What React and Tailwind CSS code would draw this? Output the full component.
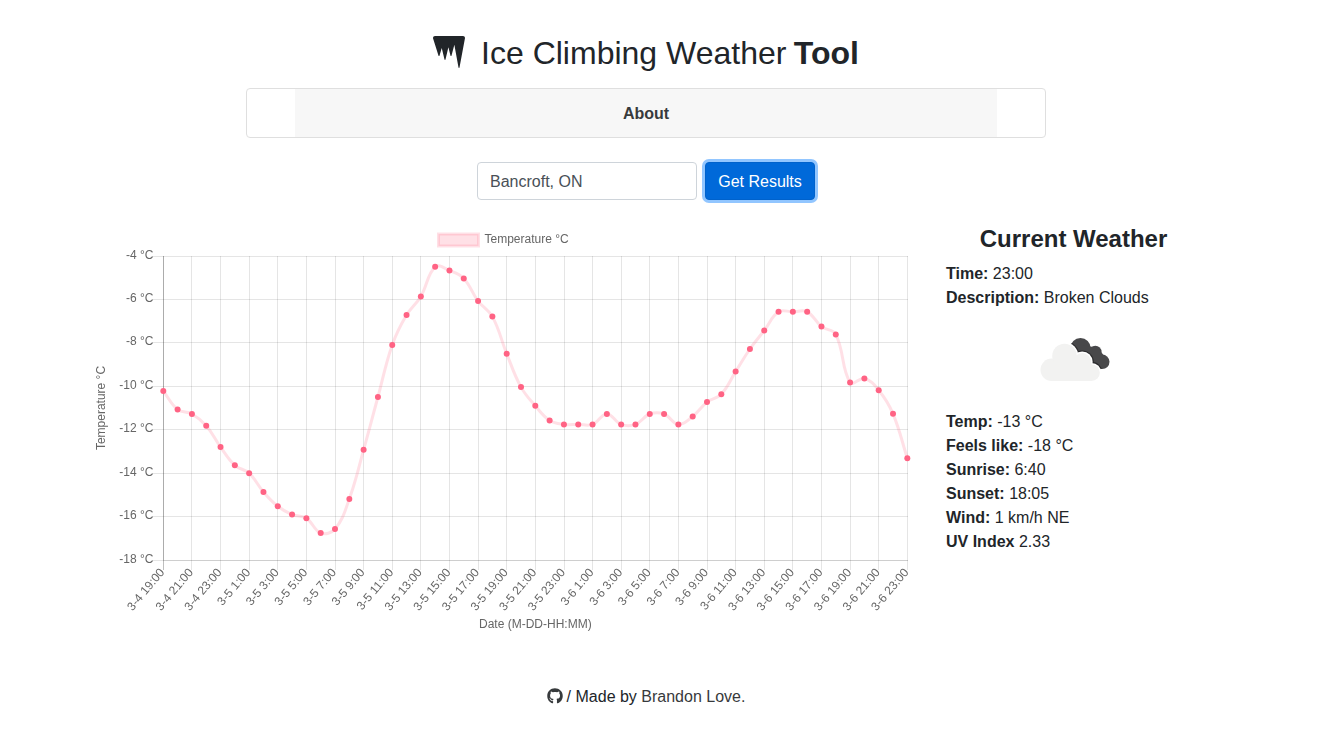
import { FaGithub, FaIcicles } from "react-icons/fa";

const LEFT = 71.3;
const STEP = 14.308;
const POINTS = [
  391, 409.5, 414, 425.7, 447, 465.3, 473.2, 492, 506.3, 514.6, 518.3, 533, 529, 499, 449.8, 397,
  344.9, 315, 296.4, 266.8, 270.4, 278.4, 301.1, 316.6, 353.7, 387.1, 405.8, 420.5, 424.4, 424.4,
  424.4, 414, 424.4, 424.4, 414, 414, 424.4, 416.5, 402.1, 394.2, 371.6, 349, 330.5, 311.8, 311.8,
  311.8, 326.6, 334.4, 382.4, 378.5, 390.2, 413.8, 458.3,
].map((y, i) => ({ x: LEFT + i * STEP, y: y - 222 }));

const Y_TICKS = [
  ["-4 °C", 34], ["-6 °C", 77], ["-8 °C", 120], ["-10 °C", 164],
  ["-12 °C", 207], ["-14 °C", 251], ["-16 °C", 294], ["-18 °C", 338],
];

const X_LABELS = Array.from({ length: 27 }, (_, i) => {
  const hours = 19 + i * 2;
  return `3-${4 + Math.floor(hours / 24)} ${hours % 24}:00`;
});

// Cubic spline through every point, with control points clamped to the plot area
function splinePath(points, tension = 0.4) {
  const clamp = (v) => Math.max(34, Math.min(338, v));
  const controls = points.map((p, i) => {
    const prev = points[i - 1] || p;
    const next = points[i + 1] || p;
    const a = Math.hypot(p.x - prev.x, p.y - prev.y);
    const b = Math.hypot(next.x - p.x, next.y - p.y);
    const fa = (tension * a) / (a + b);
    const fb = (tension * b) / (a + b);
    return {
      before: [p.x - fa * (next.x - prev.x), clamp(p.y - fa * (next.y - prev.y))],
      after: [p.x + fb * (next.x - prev.x), clamp(p.y + fb * (next.y - prev.y))],
    };
  });
  return points
    .map((p, i) =>
      i === 0
        ? `M${p.x} ${p.y}`
        : `C${controls[i - 1].after.join(" ")} ${controls[i].before.join(" ")} ${p.x} ${p.y}`
    )
    .join("");
}

function TemperatureChart() {
  return (
    <svg
      width="826"
      height="412"
      className="block shrink-0 will-change-transform font-['Helvetica_Neue',Helvetica,Arial,sans-serif] text-[12px]"
      fill="#666"
      role="img"
      aria-label="Temperature forecast"
    >
      <rect x="346.5" y="12" width="40" height="12" fill="#ff6384" fillOpacity="0.2" />
      <rect x="346.5" y="12" width="40" height="12" fill="none" stroke="#ff6384" strokeOpacity="0.2" strokeWidth="3" />
      <text x="392.5" y="21">Temperature °C</text>
      <g stroke="#000" strokeOpacity="0.1">
        {Y_TICKS.map(([label, y]) => (
          <line key={label} x1="61" x2="816" y1={y + 0.5} y2={y + 0.5} />
        ))}
        {X_LABELS.map((label, i) => {
          const x = Math.floor(71 + i * 28.62 + 0.35) + 0.5;
          return <line key={label} x1={x} x2={x} y1="34" y2="348" strokeOpacity={i === 0 ? 0.25 : 0.1} />;
        })}
        <line x1="71.5" x2="71.5" y1="34" y2="338" />
        <line x1="71" x2="816" y1="338.5" y2="338.5" />
      </g>
      <path d={splinePath(POINTS)} fill="none" stroke="#ff6384" strokeOpacity="0.2" strokeWidth="3" />
      {POINTS.map((p, i) => (
        <circle key={i} cx={p.x} cy={p.y} r="3" fill="#ff6384" />
      ))}
      {Y_TICKS.map(([label, y]) => (
        <text key={label} x="61.5" y={y + 3} textAnchor="end">{label}</text>
      ))}
      {X_LABELS.map((label, i) => (
        <text
          key={label}
          textAnchor="end"
          y="4"
          transform={`translate(${70 + i * 28.62} 348) rotate(-50)`}
        >
          {label}
        </text>
      ))}
      <text x="443.3" y="406" textAnchor="middle">Date (M-DD-HH:MM)</text>
      <text textAnchor="middle" transform="translate(13 186) rotate(-90)">Temperature °C</text>
    </svg>
  );
}

const BACK_CLOUD = [
  [65.5, 37.2, 10.2],
  [80.3, 41, 6.3],
  [87.2, 50.8, 7.3],
];
const FRONT_CLOUD = [
  [36.7, 58.8, 11.2],
  [49.5, 45, 12.3],
  [67.2, 51, 9],
  [76.5, 61.7, 8.3],
];

function FrontCloud({ grow = 0, fill }) {
  return (
    <g fill={fill}>
      {FRONT_CLOUD.map(([x, y, r]) => (
        <circle key={x} cx={x} cy={y} r={r + grow} />
      ))}
      <path d="M36.700 70V52H76.500V70Z" />
    </g>
  );
}

function BackCloud({ fill }) {
  return (
    <>
      {BACK_CLOUD.map(([x, y, r]) => (
        <circle key={x} cx={x} cy={y} r={r} fill={fill} />
      ))}
      <path d="M58 44L68 34L83 37L90 46L86 58L75 60Z" fill={fill} />
    </>
  );
}

function BrokenCloudsIcon() {
  return (
    <svg width="120" height="100" viewBox="0 0 120 100" className="ml-[2px] mt-px block" aria-hidden="true">
      <clipPath id="back-cloud">
        <BackCloud />
      </clipPath>
      <BackCloud fill="#48484a" />
      <g clipPath="url(#back-cloud)">
        <FrontCloud grow={2.6} fill="#2a2a2c" />
      </g>
      <FrontCloud grow={1.5} fill="#fff" />
      <FrontCloud fill="#f2f2f1" />
    </svg>
  );
}

function Reading({ label, value }) {
  return (
    <p>
      <b>{label}</b> {value}
    </p>
  );
}

export default function App() {
  return (
    <div className="h-[750px] w-[1292px] bg-white pt-[34px] font-['Liberation_Sans',Arial,sans-serif] text-base leading-6 text-[#212529]">
      <h1 className="flex h-[38px] items-center justify-center text-[32px] leading-[38px]">
        <FaIcicles className="mr-4 shrink-0 -translate-y-px" size={32} />
        <span>
          Ice Climbing Weather <b className="-ml-[1.5px]">Tool</b>
        </span>
      </h1>
      <nav className="mx-auto mt-4 flex h-[50px] w-[800px] justify-center rounded border border-[#dfdfdf]">
        <button className="w-[702px] bg-[#f7f7f7] pt-0.5 font-bold text-[#373a3c]">About</button>
      </nav>
      <form className="mt-6 flex justify-center gap-2" onSubmit={(e) => e.preventDefault()}>
        <input
          className="h-[38px] w-[220px] rounded border border-[#ced4da] px-3 pt-0.5 text-[#495057] outline-none"
          defaultValue="Bancroft, ON"
        />
        <button className="h-[38px] w-[110px] rounded border border-[#0062cc] bg-[#0069d9] pt-0.5 text-white shadow-[0_0_0_3px_#92c6ff]">
          Get Results
        </button>
      </form>
      <main className="mt-[22px] flex pl-[92px]">
        <TemperatureChart />
        <aside className="ml-7 w-[255px] pt-[2px]">
          <h2 className="mb-[9px] text-center text-[24px] leading-[29px] font-bold">Current Weather</h2>
          <Reading label="Time:" value="23:00" />
          <Reading label="Description:" value="Broken Clouds" />
          <div className="flex h-[100px] justify-center">
            <BrokenCloudsIcon />
          </div>
          <Reading label="Temp:" value="-13 °C" />
          <Reading label="Feels like:" value="-18 °C" />
          <Reading label="Sunrise:" value="6:40" />
          <Reading label="Sunset:" value="18:05" />
          <Reading label="Wind:" value="1 km/h NE" />
          <Reading label="UV Index" value="2.33" />
        </aside>
      </main>
      <footer className="mt-[51px] flex items-center justify-center">
        <FaGithub className="mr-1 -translate-y-px text-[#373a3c]" size={16} />
        <span className="whitespace-pre">/ Made by </span>
        <span className="text-[#373a3c]">Brandon Love.</span>
      </footer>
    </div>
  );
}
